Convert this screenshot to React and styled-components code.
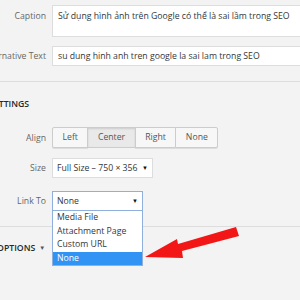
import React from 'react';
import styled, { createGlobalStyle } from 'styled-components';

const Global = createGlobalStyle`
  html, body { margin: 0; padding: 0; background: #f3f3f3; overflow: hidden; }
  body { width: 300px; height: 300px; font-family: "Open Sans", "Liberation Sans", sans-serif; }
`;

const Page = styled.div`
  position: relative;
  width: 300px;
  height: 300px;
  overflow: hidden;
  background: #f3f3f3;
`;

const Shift = styled.div`
  margin-left: -70px;
  width: 430px;
  padding-top: 5px;
  display: flex;
  flex-direction: column;
`;

const Row = styled.div`
  display: grid;
  grid-template-columns: 116px 1fr;
  column-gap: 6px;
  align-items: ${p => (p.$top ? 'start' : 'center')};
  margin-top: ${p => p.$mt || 0}px;
`;

const Label = styled.div`
  text-align: right;
  font-size: 8.7px;
  line-height: 12px;
  color: #666;
  padding-top: ${p => p.$pt || 0}px;
  white-space: nowrap;
`;

const TextArea = styled.div`
  height: 32px;
  box-sizing: border-box;
  background: #fff;
  border: 1px solid #ddd;
  padding: 4px 5px;
  font-size: 8.7px;
  line-height: 12px;
  color: #32373c;
  white-space: nowrap;
`;

const TextInput = styled.div`
  height: 20px;
  box-sizing: border-box;
  background: #fff;
  border: 1px solid #ddd;
  padding: 0 5px;
  font-size: 8.7px;
  line-height: 18px;
  color: #32373c;
  white-space: nowrap;
`;

const Divider = styled.div`
  height: 1px;
  background: #ddd;
  margin-top: ${p => p.$mt}px;
  margin-left: 70px;
  width: 300px;
`;

const Heading = styled.div`
  margin-top: ${p => p.$mt}px;
  margin-left: ${p => p.$ml}px;
  font-size: 8.7px;
  line-height: 12px;
  font-weight: 600;
  color: #23282d;
  white-space: nowrap;
  display: flex;
  align-items: center;
  gap: 4px;
`;

const Caret = styled.span`
  font-size: 6px;
  color: #555;
`;

const Group = styled.div`
  display: flex;
`;

const Btn = styled.div`
  height: 21px;
  box-sizing: border-box;
  padding: 0 9.5px;
  border: 1px solid #ccc;
  margin-left: -1px;
  font-size: 8.7px;
  line-height: 19px;
  color: #555;
  background: ${p => (p.$active ? '#e9e9e9' : '#f7f7f7')};
  box-shadow: ${p => (p.$active ? 'inset 0 1px 2px rgba(0,0,0,0.12)' : '0 1px 0 #ddd')};
  &:first-child { margin-left: 0; border-radius: 2px 0 0 2px; }
  &:last-child { border-radius: 0 2px 2px 0; }
`;

const SelectWrap = styled.div`
  position: relative;
  width: ${p => p.$w}px;
`;

const Select = styled.div`
  height: 20px;
  box-sizing: border-box;
  background: #fff;
  border: 1px solid ${p => (p.$focus ? '#8fb0dc' : '#ddd')};
  padding: 0 4px 0 4px;
  display: flex;
  align-items: center;
  justify-content: space-between;
  gap: 2px;
  font-size: 8.7px;
  color: #32373c;
  white-space: nowrap;
`;

const SelText = styled.span`
  overflow: hidden;
`;

const Tri = styled.span`
  flex: none;
  font-size: 6px;
  color: #111;
`;

const List = styled.div`
  position: absolute;
  top: 100%;
  left: 0;
  right: 0;
  margin-top: -1px;
  background: #fff;
  border: 1px solid #8fb0dc;
  z-index: 2;
`;

const Item = styled.div`
  height: 13.5px;
  padding: 0 4px;
  font-size: 8.7px;
  line-height: 13.5px;
  color: ${p => (p.$sel ? '#fff' : '#32373c')};
  background: ${p => (p.$sel ? '#3193f3' : 'transparent')};
  white-space: nowrap;
`;

const Arrow = styled.svg`
  position: absolute;
  left: 0;
  top: 0;
  width: 300px;
  height: 300px;
  pointer-events: none;
  z-index: 3;
`;

export default function App() {
  return (
    <Page>
      <Global />
      <Shift>
        <Row $top>
          <Label $pt={5}>Caption</Label>
          <TextArea>Sử dụng hình ảnh trên Google có thể là sai lầm trong SEO</TextArea>
        </Row>
        <Row $mt={9}>
          <Label>Alternative Text</Label>
          <TextInput>su dung hinh anh tren google la sai lam trong SEO</TextInput>
        </Row>
        <Divider $mt={15} />
        <Heading $mt={16} $ml={-38}>ATTACHMENT DISPLAY SETTINGS</Heading>
        <Row $mt={17}>
          <Label>Align</Label>
          <Group>
            <Btn>Left</Btn>
            <Btn $active>Center</Btn>
            <Btn>Right</Btn>
            <Btn>None</Btn>
          </Group>
        </Row>
        <Row $mt={10}>
          <Label>Size</Label>
          <SelectWrap $w={101}>
            <Select>
              <SelText>Full Size – 750 × 356</SelText>
              <Tri>▼</Tri>
            </Select>
          </SelectWrap>
        </Row>
        <Row $mt={13}>
          <Label>Link To</Label>
          <SelectWrap $w={91}>
            <Select $focus>
              <SelText>None</SelText>
              <Tri>▼</Tri>
            </Select>
            <List>
              <Item>Media File</Item>
              <Item>Attachment Page</Item>
              <Item>Custom URL</Item>
              <Item $sel>None</Item>
            </List>
          </SelectWrap>
        </Row>
        <Divider $mt={15} />
        <Heading $mt={15} $ml={18}>
          ADVANCED OPTIONS <Caret>▼</Caret>
        </Heading>
      </Shift>
      <Arrow viewBox="0 0 300 300">
        <polygon
          points="145,257 177,239 178,244 236,227 239,236 182,251 183,258"
          fill="#f21616"
        />
      </Arrow>
    </Page>
  );
}
